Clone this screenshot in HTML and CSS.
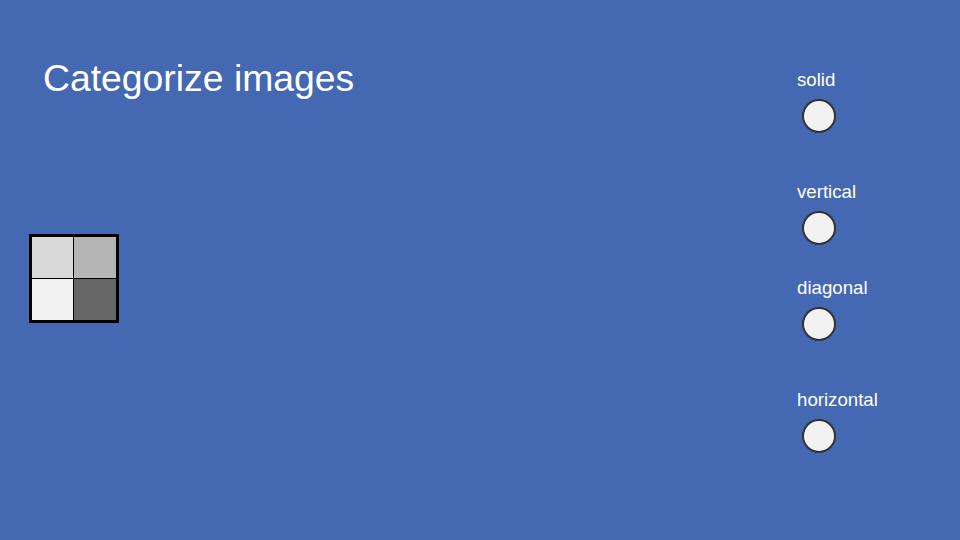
FILE: index.html
```html
<!DOCTYPE html>
<html>
<head>
<meta charset="utf-8">
<link rel="stylesheet" href="styles.css">
</head>
<body>
<div class="stage">
  <div class="left">
    <h1 class="title">Categorize images</h1>
    <div class="pic">
      <div class="cell c1"></div>
      <div class="cell c2"></div>
      <div class="cell c3"></div>
      <div class="cell c4"></div>
    </div>
  </div>
  <div class="right">
    <div class="opt opt-solid"><div class="label">solid</div><div class="dot"></div></div>
    <div class="opt opt-vertical"><div class="label">vertical</div><div class="dot"></div></div>
    <div class="opt opt-diagonal"><div class="label">diagonal</div><div class="dot"></div></div>
    <div class="opt opt-horizontal"><div class="label">horizontal</div><div class="dot"></div></div>
  </div>
</div>
</body>
</html>
```
FILE: styles.css
```css
html, body {
  margin: 0;
  padding: 0;
  background: #4468b1;
  font-family: "Liberation Sans", Arial, sans-serif;
  color: #ffffff;
}
.stage {
  width: 960px;
  height: 540px;
  display: flex;
  justify-content: space-between;
}
.left {
  padding-left: 29px;
  padding-top: 57px;
  display: flex;
  flex-direction: column;
  align-items: flex-start;
}
.title {
  margin: 0 0 0 14px;
  font-size: 37.33px;
  line-height: 42px;
  font-weight: normal;
}
.pic {
  margin-top: 135px;
  border: 3px solid #000;
  background: #000;
  display: grid;
  grid-template-columns: 41px 42px;
  grid-template-rows: 41px 41px;
  gap: 1px;
}
.c1 { background: #d9d9d9; }
.c2 { background: #b5b5b5; }
.c3 { background: #f2f2f2; }
.c4 { background: #666666; }
.right {
  width: 163px;
  padding-top: 69px;
  display: flex;
  flex-direction: column;
}
.opt {
  display: flex;
  flex-direction: column;
  align-items: flex-start;
}
.opt-vertical, .opt-horizontal { margin-top: 48px; }
.opt-diagonal { margin-top: 32px; }
.label {
  font-size: 18.67px;
  line-height: 22px;
}
.dot {
  margin-top: 8px;
  margin-left: 5px;
  width: 30px;
  height: 30px;
  border: 2px solid #333;
  border-radius: 50%;
  background: #f2f2f2;
}
```
